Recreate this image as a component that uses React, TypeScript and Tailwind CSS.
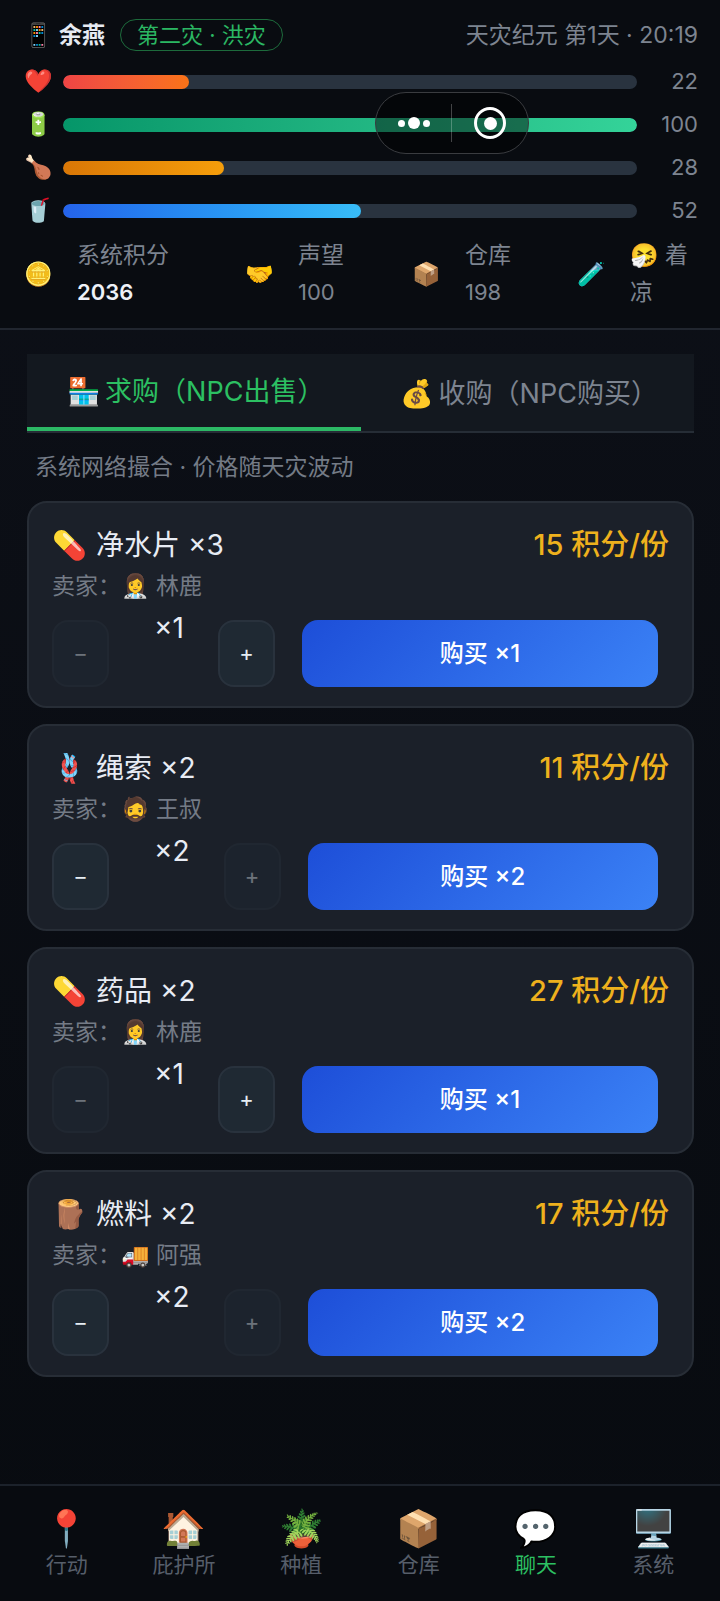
import { useState } from "react";
import clsx from "clsx";

interface Vital {
  icon: string;
  label: string;
  value: number;
  fill: string;
}

interface Stat {
  icon: string;
  text: string;
  value?: string;
  strong?: boolean;
}

interface Offer {
  id: string;
  icon: string;
  name: string;
  stock: number;
  price: number;
  sellerIcon: string;
  seller: string;
  initial: number;
}

const vitals: Vital[] = [
  { icon: "❤️", label: "生命", value: 22, fill: "from-[#ef4444] to-[#f97316]" },
  { icon: "🔋", label: "体力", value: 100, fill: "from-[#059669] to-[#34d399]" },
  { icon: "🍗", label: "饱食", value: 28, fill: "from-[#d97706] to-[#f59e0b]" },
  { icon: "🥤", label: "水分", value: 52, fill: "from-[#2563eb] to-[#38bdf8]" }
];

const stats: Stat[] = [
  { icon: "🪙", text: "系统积分", value: "2036", strong: true },
  { icon: "🤝", text: "声望", value: "100" },
  { icon: "📦", text: "仓库", value: "198" },
  { icon: "🧪", text: "🤧 着凉" }
];

const offers: Offer[] = [
  { id: "water", icon: "💊", name: "净水片", stock: 3, price: 15, sellerIcon: "👩‍⚕️", seller: "林鹿", initial: 1 },
  { id: "rope", icon: "🪢", name: "绳索", stock: 2, price: 11, sellerIcon: "🧔", seller: "王叔", initial: 2 },
  { id: "med", icon: "💊", name: "药品", stock: 2, price: 27, sellerIcon: "👩‍⚕️", seller: "林鹿", initial: 1 },
  { id: "fuel", icon: "🪵", name: "燃料", stock: 2, price: 17, sellerIcon: "🚚", seller: "阿强", initial: 2 }
];

const navItems = [
  { icon: "📍", label: "行动" },
  { icon: "🏠", label: "庇护所" },
  { icon: "🪴", label: "种植" },
  { icon: "📦", label: "仓库" },
  { icon: "💬", label: "聊天" },
  { icon: "🖥️", label: "系统" }
];

function StatusHeader() {
  return (
    <header className="relative border-b-2 border-[#21262f] bg-[#090c11] pt-[17px] pr-[22px] pb-[17px] pl-6 text-[23px] text-[#7d8490]">
      <div className="flex h-9 items-center">
        <span className="w-[35px]">📱</span>
        <h1 className="font-bold text-[#e6eaf2]">余燕</h1>
        <span className="ml-[15px] flex h-8 items-center rounded-full border border-[#1d6b3c] px-4 text-[22px] text-[#2bb763]">
          第二灾 · 洪灾
        </span>
        <span className="ml-auto">天灾纪元 第1天 · 20:19</span>
      </div>

      <div className="mt-[7px]">
        {vitals.map((vital) => (
          <div key={vital.label} className="flex h-[43px] items-center">
            <span className="w-[39px]">{vital.icon}</span>
            <div
              role="progressbar"
              aria-label={vital.label}
              aria-valuenow={vital.value}
              aria-valuemin={0}
              aria-valuemax={100}
              className="h-[14px] flex-1 overflow-hidden rounded-full bg-[#29333f]"
            >
              <div
                className={clsx("h-full rounded-full bg-linear-to-r", vital.fill)}
                style={{ width: `${vital.value}%` }}
              />
            </div>
            <span className="w-[61px] text-right text-[22px]">{vital.value}</span>
          </div>
        ))}
      </div>

      <div className="grid grid-cols-[221fr_167fr_165fr_121fr] pt-[5px]">
        {stats.map((stat) => (
          <div key={stat.text} className="flex h-[74px] items-center leading-[37px]">
            <span className="w-[53px] shrink-0">{stat.icon}</span>
            <span>
              {stat.text}
              {stat.value ? (
                <span className={clsx("block text-[22px]", stat.strong && "font-semibold text-[#eef1f7]")}>
                  {stat.value}
                </span>
              ) : null}
            </span>
          </div>
        ))}
      </div>

      <MiniProgramCapsule />
    </header>
  );
}

function MiniProgramCapsule() {
  return (
    <div className="absolute top-[92px] right-[191px] flex h-[62px] w-[154px] items-center rounded-full border border-[#3a3c40] bg-black/45">
      <button type="button" aria-label="更多" className="flex h-full w-[75px] items-center justify-center gap-[3px]">
        <span className="size-[7px] rounded-full bg-white" />
        <span className="size-3 rounded-full bg-white" />
        <span className="size-[7px] rounded-full bg-white" />
      </button>
      <span className="h-[38px] w-px bg-white/25" />
      <button type="button" aria-label="关闭" className="flex h-full flex-1 items-center justify-center">
        <span className="flex size-8 items-center justify-center rounded-full border-3 border-white">
          <span className="size-[13px] rounded-full bg-white" />
        </span>
      </button>
    </div>
  );
}

function StepButton({ label, children, disabled, onClick }: {
  label: string;
  children: string;
  disabled: boolean;
  onClick: () => void;
}) {
  return (
    <button
      type="button"
      aria-label={label}
      disabled={disabled}
      onClick={onClick}
      className="h-[67px] w-[57px] shrink-0 rounded-2xl border-2 border-[#29323d] bg-[#1f2933] text-[22px] text-[#e6edf3] disabled:opacity-40"
    >
      {children}
    </button>
  );
}

function OfferCard({ offer }: { offer: Offer }) {
  const [count, setCount] = useState(offer.initial);

  return (
    <article className="rounded-[20px] border-2 border-[#272d36] bg-[#1b2029] px-[23px] pt-[21px] pb-[19px]">
      <div className="flex h-[42px] items-center justify-between text-[28px]">
        <h2 className="flex items-center text-[#e8ecf4]">
          <span className="w-11">{offer.icon}</span>
          {offer.name} ×{offer.stock}
        </h2>
        <span className="text-[29px] font-medium text-[#eeb11d]">{offer.price} 积分/份</span>
      </div>
      <p className="flex h-[41px] items-center text-[23px] text-[#747b86]">
        卖家：
        <span className="w-[35px]">{offer.sellerIcon}</span>
        {offer.seller}
      </p>
      <div className="mt-[13px] flex pr-[11px]">
        <StepButton label="减少" disabled={count <= 1} onClick={() => setCount(count - 1)}>
          −
        </StepButton>
        <span className="mr-[34px] ml-[45px] text-[28px] leading-4 text-[#e8ecf4]">×{count}</span>
        <StepButton label="增加" disabled={count >= offer.stock} onClick={() => setCount(count + 1)}>
          +
        </StepButton>
        <button
          type="button"
          className="ml-[27px] h-[67px] flex-1 rounded-2xl bg-linear-[135deg] from-[#1d4ed8] to-[#3b82f6] text-[24px] font-medium text-white"
        >
          购买 ×{count}
        </button>
      </div>
    </article>
  );
}

export default function App() {
  const [tab, setTab] = useState("buy");
  const [page, setPage] = useState("聊天");

  return (
    <div className="flex min-h-screen flex-col bg-linear-to-b from-[#0d1018] to-[#080b10] font-['Inter','Noto_Sans_CJK_SC','Noto_Color_Emoji',sans-serif]">
      <StatusHeader />

      <main className="flex-1 pt-6 pr-[26px] pl-[27px]">
        <div role="tablist" className="flex h-[79px] border-b-2 border-[#262d36] bg-[#13181f] text-[27px]">
          <button
            type="button"
            role="tab"
            aria-selected={tab === "buy"}
            onClick={() => setTab("buy")}
            className="flex flex-1 items-center justify-center border-[#2cb865] pt-[3px] text-[#7d8490] aria-selected:border-b-4 aria-selected:text-[#2cc062]"
          >
            <span className="w-[42px]">🏪</span>
            求购（NPC出售）
          </button>
          <button
            type="button"
            role="tab"
            aria-selected={tab === "sell"}
            onClick={() => setTab("sell")}
            className="flex flex-1 items-center justify-center border-[#2cb865] pt-[3px] text-[#7d8490] aria-selected:border-b-4 aria-selected:text-[#2cc062]"
          >
            <span className="w-[42px]">💰</span>
            收购（NPC购买）
          </button>
        </div>
        <p className="flex h-[68px] items-center px-2 text-[23px] text-[#747b86]">
          系统网络撮合 · 价格随天灾波动
        </p>
        <div className="space-y-4">
          {offers.map((offer) => (
            <OfferCard key={offer.id} offer={offer} />
          ))}
        </div>
      </main>

      <nav className="flex h-[117px] border-t-2 border-[#1c222b] bg-[#080b10] px-2 pt-[22px]">
        {navItems.map((item) => (
          <button
            key={item.label}
            type="button"
            aria-current={page === item.label ? "page" : undefined}
            onClick={() => setPage(item.label)}
            className={clsx(
              "flex flex-1 flex-col items-center text-[21px] leading-7",
              page === item.label ? "text-[#2cc062]" : "text-[#565e6a]"
            )}
          >
            <span className="font-['Noto_Color_Emoji',sans-serif] text-[36px] leading-[43px]">{item.icon}</span>
            {item.label}
          </button>
        ))}
      </nav>
    </div>
  );
}
